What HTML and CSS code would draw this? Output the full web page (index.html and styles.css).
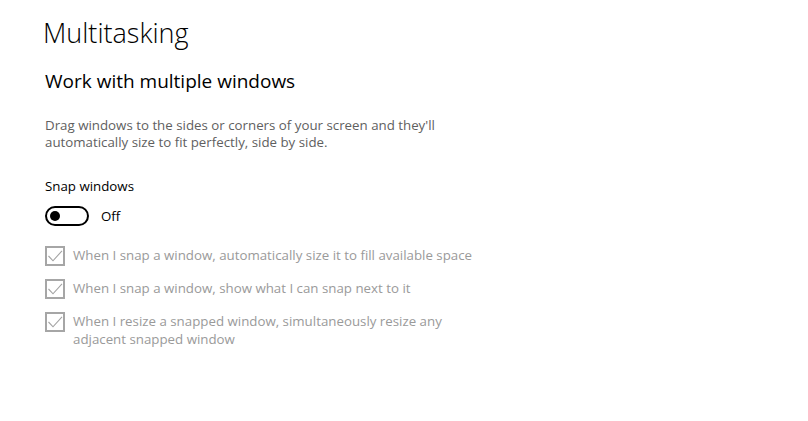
FILE: index.html
```html
<!DOCTYPE html>
<html lang="en">
<head>
  <meta charset="UTF-8" />
  <meta name="viewport" content="width=device-width, initial-scale=1.0"/>
  <title>Multitasking</title>
  <link rel="stylesheet" href="styles.css">
</head>
<body>
  <div class="page">
    <h1 class="title">Multitasking</h1>
    <h2 class="section">Work with multiple windows</h2>
    <p class="desc">Drag windows to the sides or corners of your screen and they'll<br>automatically size to fit perfectly, side by side.</p>

    <div class="label">Snap windows</div>
    <div class="toggle-row">
      <span class="toggle"><span class="knob"></span></span>
      <span class="toggle-text">Off</span>
    </div>

    <div class="check-row">
      <span class="box"><svg width="20" height="20" viewBox="0 0 20 20"><path d="M3.5 10 L8 14.8 L17 4.8" fill="none" stroke="#a3a3a3" stroke-width="1.1"/></svg></span>
      <span class="check-text">When I snap a window, automatically size it to fill available space</span>
    </div>
    <div class="check-row">
      <span class="box"><svg width="20" height="20" viewBox="0 0 20 20"><path d="M3.5 10 L8 14.8 L17 4.8" fill="none" stroke="#a3a3a3" stroke-width="1.1"/></svg></span>
      <span class="check-text">When I snap a window, show what I can snap next to it</span>
    </div>
    <div class="check-row">
      <span class="box"><svg width="20" height="20" viewBox="0 0 20 20"><path d="M3.5 10 L8 14.8 L17 4.8" fill="none" stroke="#a3a3a3" stroke-width="1.1"/></svg></span>
      <span class="check-text">When I resize a snapped window, simultaneously resize any<br>adjacent snapped window</span>
    </div>
  </div>
</body>
</html>
```

FILE: styles.css
```css
body {
  margin: 0;
  background: #fff;
  font-family: "Open Sans", "Noto Sans", Arial, sans-serif;
  color: #000;
}
.page {
  padding: 14px 0 0 45px;
}
.title {
  font-size: 27px;
  font-weight: 300;
  margin: 0 0 0 -2px;
  line-height: 38px;
}
.section {
  font-size: 19px;
  font-weight: 400;
  margin: 15px 0 0 0;
  line-height: 28px;
}
.desc {
  font-size: 13.3px;
  color: #5f5f5f;
  line-height: 17px;
  margin: 22px 0 0 0;
}
.label {
  font-size: 13.3px;
  margin-top: 26px;
  line-height: 18px;
}
.toggle-row {
  display: flex;
  align-items: center;
  margin-top: 11px;
}
.toggle {
  width: 44px;
  height: 20px;
  border: 2px solid #000;
  border-radius: 10px;
  display: flex;
  align-items: center;
  padding-left: 3px;
  box-sizing: border-box;
}
.knob {
  width: 10px;
  height: 10px;
  border-radius: 50%;
  background: #000;
}
.toggle-text {
  font-size: 13.3px;
  margin-left: 12px;
}
.check-row {
  display: flex;
  align-items: flex-start;
  margin-top: 13px;
}
.toggle-row + .check-row {
  margin-top: 20px;
}
.box {
  width: 16px;
  height: 16px;
  border: 2px solid #a6a6a6;
  flex: none;
  display: flex;
}
.box svg {
  margin: -2px;
}
.check-text {
  font-size: 13.3px;
  color: #9a9a9a;
  line-height: 18px;
  margin-left: 8px;
}
```
